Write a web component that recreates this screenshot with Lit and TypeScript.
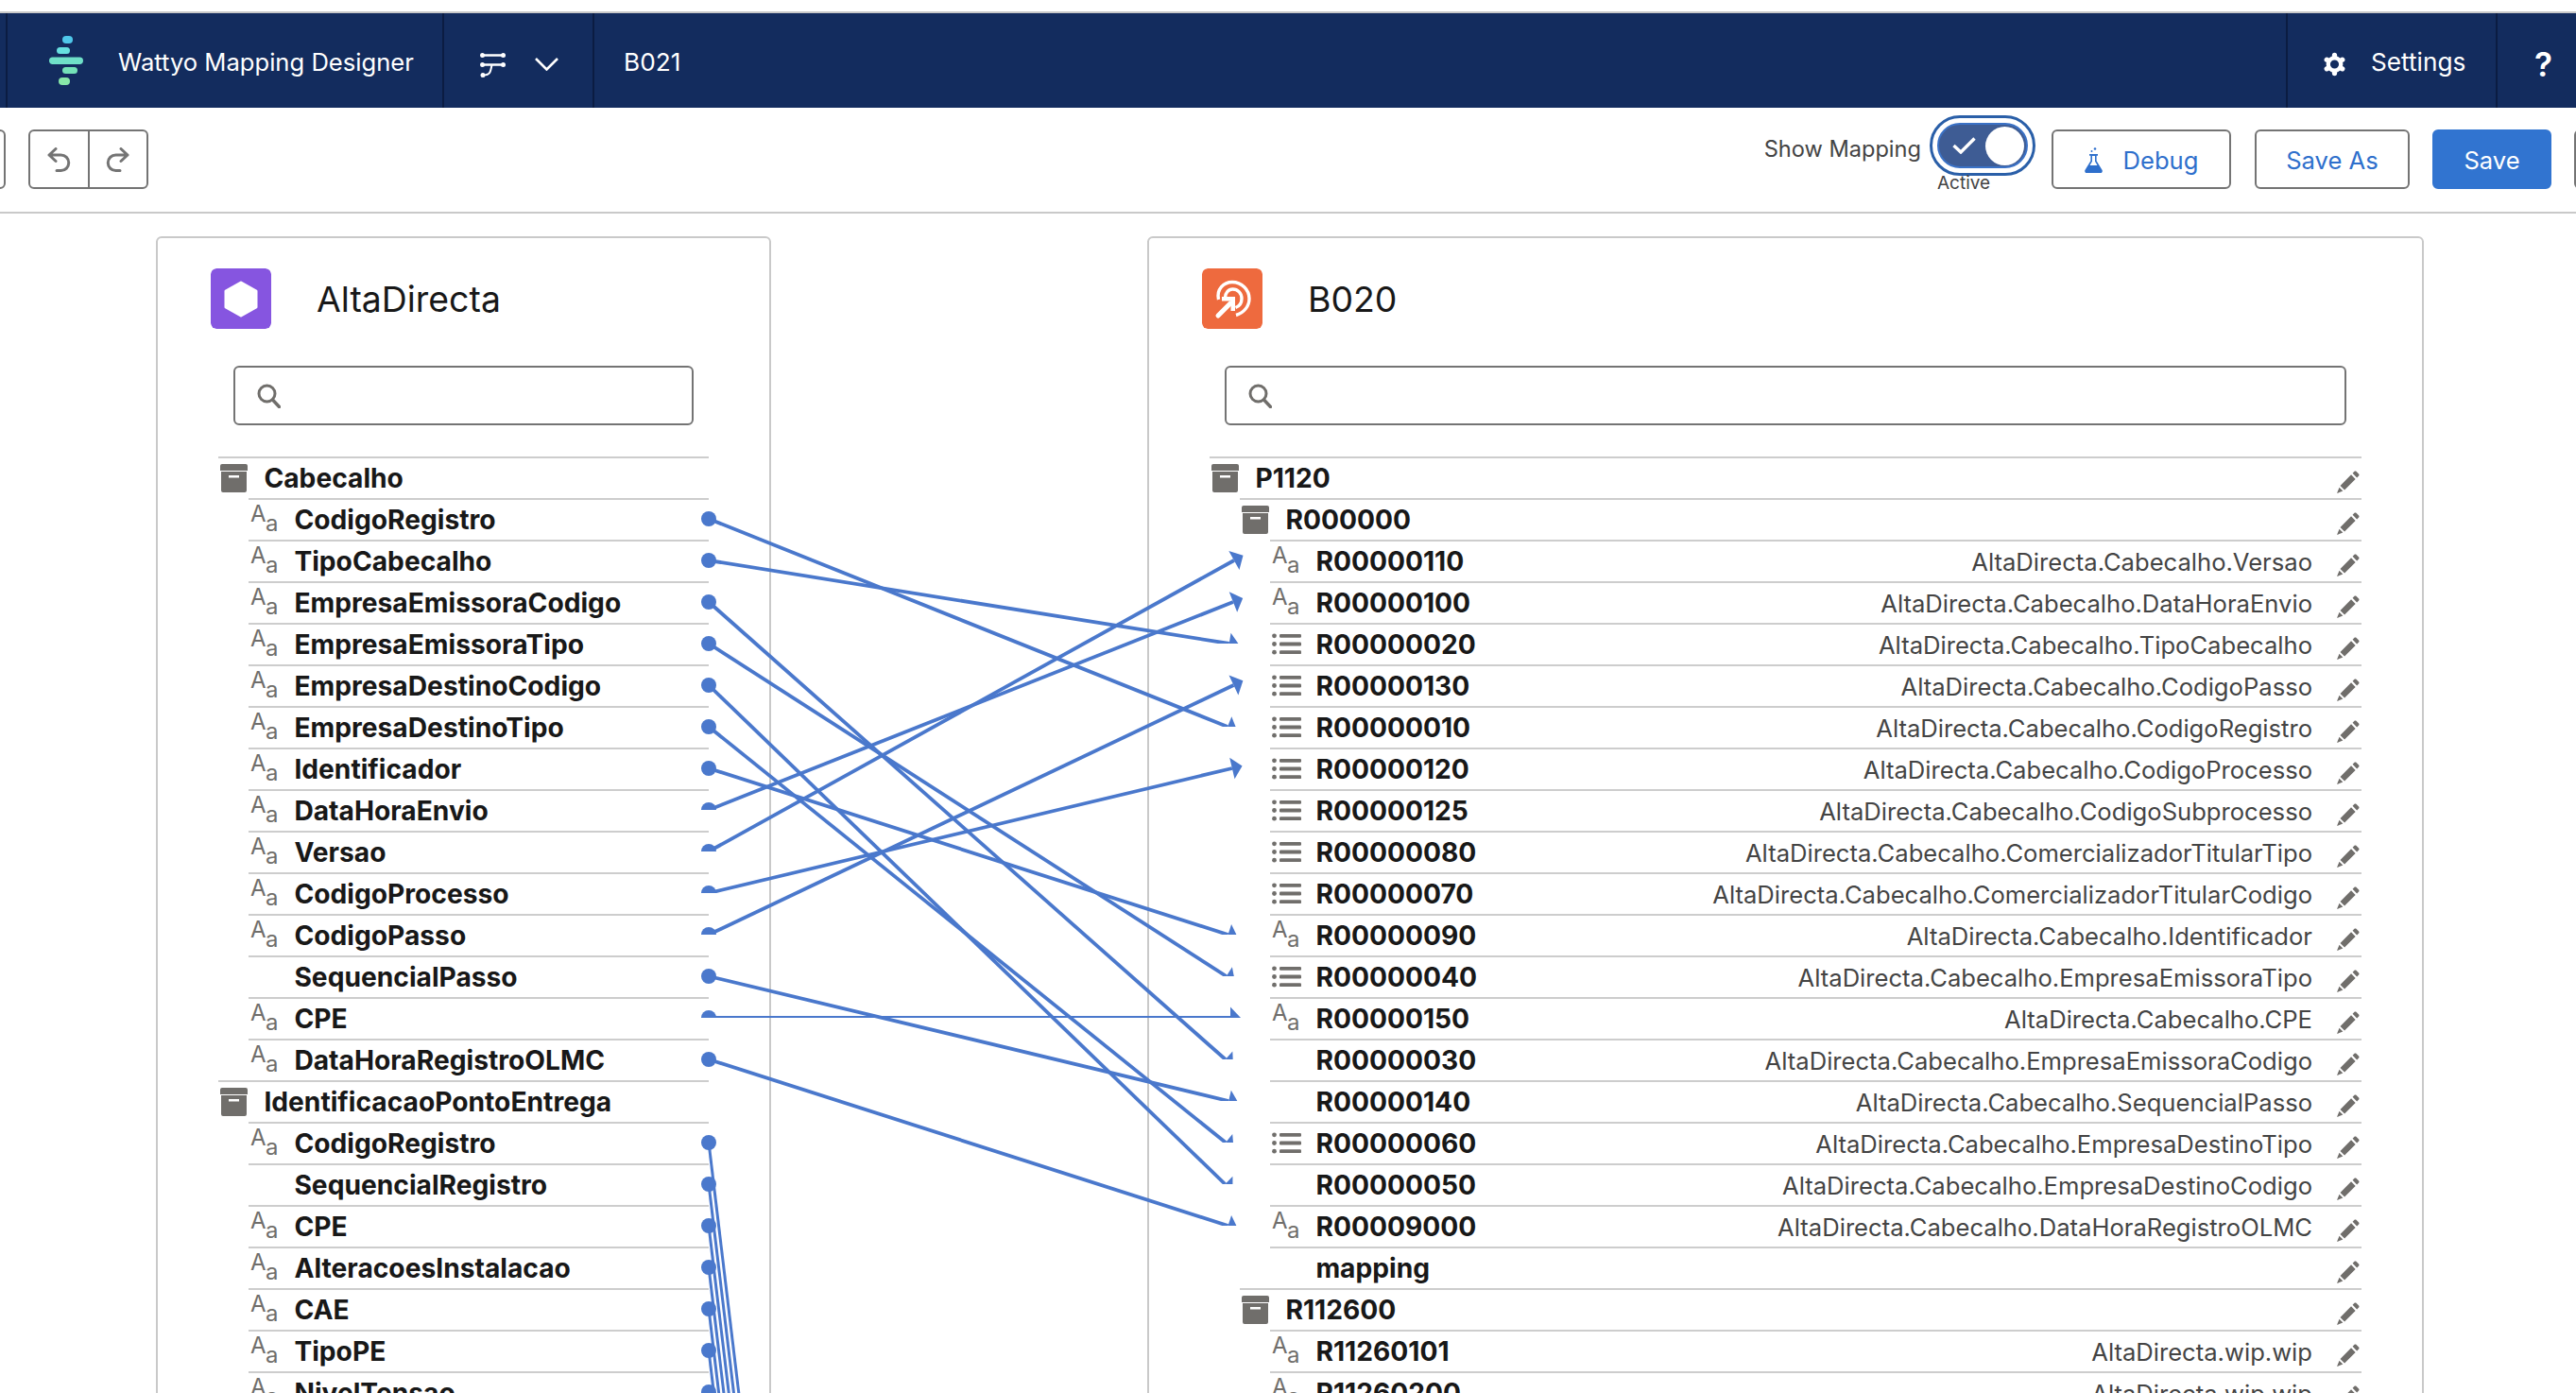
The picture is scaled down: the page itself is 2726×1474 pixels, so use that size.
import { LitElement, html, css, svg, nothing } from "lit";
import { customElement } from "lit/decorators.js";

type Kind = "box" | "aa" | "list" | "none";
interface Row { level: number; kind: Kind; name: string; map?: string; pen?: boolean }

const P = "AltaDirecta.Cabecalho.";
const leftRows: Row[] = [
  { level: 0, kind: "box", name: "Cabecalho" },
  ...[
    ["aa", "CodigoRegistro"], ["aa", "TipoCabecalho"], ["aa", "EmpresaEmissoraCodigo"], ["aa", "EmpresaEmissoraTipo"],
    ["aa", "EmpresaDestinoCodigo"], ["aa", "EmpresaDestinoTipo"], ["aa", "Identificador"], ["aa", "DataHoraEnvio"],
    ["aa", "Versao"], ["aa", "CodigoProcesso"], ["aa", "CodigoPasso"], ["none", "SequencialPasso"], ["aa", "CPE"],
    ["aa", "DataHoraRegistroOLMC"],
  ].map(([k, n]) => ({ level: 1, kind: k as Kind, name: n })),
  { level: 0, kind: "box", name: "IdentificacaoPontoEntrega" },
  ...[
    ["aa", "CodigoRegistro"], ["none", "SequencialRegistro"], ["aa", "CPE"], ["aa", "AlteracoesInstalacao"],
    ["aa", "CAE"], ["aa", "TipoPE"], ["aa", "NivelTensao"],
  ].map(([k, n]) => ({ level: 1, kind: k as Kind, name: n })),
];

const rightRows: Row[] = [
  { level: 0, kind: "box", name: "P1120", pen: true },
  { level: 1, kind: "box", name: "R000000", pen: true },
  ...[
    ["aa", "R00000110", "Versao"], ["aa", "R00000100", "DataHoraEnvio"], ["list", "R00000020", "TipoCabecalho"],
    ["list", "R00000130", "CodigoPasso"], ["list", "R00000010", "CodigoRegistro"], ["list", "R00000120", "CodigoProcesso"],
    ["list", "R00000125", "CodigoSubprocesso"], ["list", "R00000080", "ComercializadorTitularTipo"],
    ["list", "R00000070", "ComercializadorTitularCodigo"], ["aa", "R00000090", "Identificador"],
    ["list", "R00000040", "EmpresaEmissoraTipo"], ["aa", "R00000150", "CPE"], ["none", "R00000030", "EmpresaEmissoraCodigo"],
    ["none", "R00000140", "SequencialPasso"], ["list", "R00000060", "EmpresaDestinoTipo"],
    ["none", "R00000050", "EmpresaDestinoCodigo"], ["aa", "R00009000", "DataHoraRegistroOLMC"],
  ].map(([k, n, m]) => ({ level: 2, kind: k as Kind, name: n, map: P + m, pen: true })),
  { level: 2, kind: "none", name: "mapping", pen: true },
  { level: 1, kind: "box", name: "R112600", pen: true },
  { level: 2, kind: "aa", name: "R11260101", map: "AltaDirecta.wip.wip", pen: true },
  { level: 2, kind: "aa", name: "R11260200", map: "AltaDirecta.wip.wip", pen: true },
];

// left row index -> right row index
const links: [number, number][] = [
  [0, 4], [1, 2], [2, 12], [3, 10], [4, 15], [5, 14], [6, 9], [7, 1], [8, 0], [9, 5], [10, 3], [11, 13], [12, 11], [13, 16],
];

const LINK = "#4a78cc";
const X1 = 750;

function connector(a: number, b: number) {
  const y1 = 549 + 44 * a;
  const y2 = 593 + 44 * b;
  const base = 1302;
  const slope = Math.hypot(base - X1, y2 - y1);
  const X2 = base - (8 * (y2 - y1)) / slope;
  const len = Math.hypot(X2 - X1, y2 - y1);
  const ux = (X2 - X1) / len;
  const uy = (y2 - y1) / len;
  const tip = `${X2 + ux * 11},${y2 + uy * 11}`;
  const c1 = `${X2 - uy * 11.5},${y2 + ux * 11.5}`;
  const c2 = `${X2 + uy * 11.5},${y2 - ux * 11.5}`;
  return svg`<svg x="0" y="0" width="2726" height=${Math.max(y1, y2)}>
    <line x1=${X1} y1=${y1} x2=${X2} y2=${y2} stroke=${LINK} stroke-width="3.8"></line>
    <circle cx=${X1} cy=${y1} r="8" fill=${LINK}></circle>
    <polygon points="${tip} ${c1} ${c2}" fill=${LINK}></polygon>
  </svg>`;
}

function bundleLine(a: number) {
  const y1 = 549 + 44 * a;
  return svg`<line x1=${X1} y1=${y1} x2=${X1 + (1500 - y1) * 0.12} y2="1500" stroke=${LINK} stroke-width="3"></line>
    <circle cx=${X1} cy=${y1} r="8" fill=${LINK}></circle>`;
}

const iconBox = html`<svg class="ic" width="29" height="30" viewBox="0 0 29 30">
  <path fill="#706e6b" d="M2 0h25a2 2 0 0 1 2 2v5H0V2a2 2 0 0 1 2-2zM1 8h27v20a2 2 0 0 1-2 2H3a2 2 0 0 1-2-2zm8 4v2.6h11V12z" fill-rule="evenodd"></path>
</svg>`;
const iconList = html`<svg class="ic list" width="31" height="23" viewBox="0 0 31 23">
  <g fill="#706e6b"><circle cx="2.5" cy="2.8" r="2.4"></circle><circle cx="2.5" cy="11.5" r="2.4"></circle><circle cx="2.5" cy="20.2" r="2.4"></circle>
  <rect x="8" y="1" width="23" height="3.8" rx="1.2"></rect><rect x="8" y="9.600" width="23" height="3.8" rx="1.2"></rect><rect x="8" y="18.300" width="23" height="3.8" rx="1.2"></rect></g>
</svg>`;
const iconAa = html`<span class="aa"><span class="big">A</span><span class="small">a</span></span>`;
const pencil = html`<svg class="pen" width="24" height="24" viewBox="0 0 22 22">
  <path fill="#706e6b" d="M3.2 14.6 13.8 4l4.2 4.2L7.4 18.8zM2.3 16.2l3.5 3.5L0 22zM15.2 2.6 17 .8c.5-.5 1.2-.5 1.7 0l2.5 2.5c.5.5.5 1.2 0 1.7l-1.8 1.8z"></path>
</svg>`;
const searchIcon = html`<svg class="sicon" width="25" height="26" viewBox="0 0 25 26">
  <circle cx="10.5" cy="10.5" r="8.5" fill="none" stroke="#706e6b" stroke-width="3"></circle>
  <path d="M16.5 17 23.5 24.5" stroke="#706e6b" stroke-width="3.4" stroke-linecap="round"></path>
</svg>`;

function rowTpl(r: Row) {
  const icon = r.kind === "box" ? iconBox : r.kind === "aa" ? iconAa : r.kind === "list" ? iconList : nothing;
  return html`<div class="row l${r.level}">
    <span class="slot">${icon}</span>
    <span class="name">${r.name}</span>
    ${r.map ? html`<span class="map">${r.map}</span>` : nothing}
    ${r.pen ? pencil : nothing}
  </div>`;
}

@customElement("app-root")
export class AppRoot extends LitElement {
  static styles = css`
    :host { display: block; position: relative; width: 2726px; height: 1474px; overflow: hidden; background: #fff; font-family: Inter, "Noto Sans", sans-serif; color: #181818; }
    .strip { height: 12px; border-bottom: 2px solid #c9c9c9; }
    .nav { display: flex; height: 100px; background: #132c5e; color: #fff; font-size: 26.2px; }
    .cell { display: flex; align-items: center; border-right: 2px solid #0b1c42; box-sizing: border-box; flex: none; padding-top: 2px; }
    .c0 { width: 8px; }
    .c1 { width: 462px; padding-left: 44px; gap: 37px; font-size: 25.6px; }
    .navlogo { margin-top: -2px; }
    .c2 { width: 159px; padding-left: 38px; gap: 31px; }
    .nudge { margin-top: 6px; }
    .c3 { flex: 1; padding-left: 31px; }
    .c4 { width: 222px; padding-left: 37px; gap: 26px; }
    .c5 { width: 83px; border-right: 0; padding: 7px 0 0 39px; font-size: 35px; font-weight: 600; }

    .tools { display: flex; height: 110px; border-bottom: 2px solid #c9c9c9; box-sizing: content-box; }
    .btn { height: 63px; box-sizing: border-box; border: 2px solid #747474; border-radius: 6px; background: #fff; display: flex; align-items: center; justify-content: center; color: #2e6fcc; font-size: 25.6px; margin-top: 23px; padding-top: 2px; }
    .stub { width: 67px; margin-left: -61px; }
    .group { width: 127px; margin-left: 24px; display: flex; align-items: stretch; padding: 0; }
    .group span { flex: 1; height: 100%; display: flex; align-items: center; justify-content: center; }
    .group span + span { border-left: 2px solid #747474; }
    .spacer { flex: 1; }
    .showm { font-size: 23.6px; color: #444; margin: 30px 9px 0 0; line-height: 28px; }
    .tg { width: 112px; margin: 8px 17px 0 0; }
    .outer { width: 112px; height: 64px; box-sizing: border-box; border: 3px solid #2a5fa8; border-radius: 32px; padding: 5px; }
    .inner { height: 100%; box-sizing: border-box; border: 2px solid #3b72c6; border-radius: 24px; background: #3e5c94; display: flex; align-items: center; justify-content: space-between; padding: 0 2px 0 14px; }
    .knob { width: 41px; height: 41px; border-radius: 50%; background: #fff; }
    .active { font-size: 19px; color: #444; line-height: 14px; margin: 1px 0 0 8px; }
    .debug { width: 190px; gap: 22px; margin-right: 25px; }
    .saveas { width: 164px; margin-right: 24px; }
    .save { width: 126px; margin-right: 24px; background: #3174d0; border-color: #3174d0; color: #fff; }
    .stubr { width: 60px; margin-right: -58px; }

    .main { display: flex; gap: 398px; padding: 24px 0 0 165px; }
    .panel { border: 2px solid #c9c9c9; border-radius: 6px 6px 0 0; box-sizing: border-box; padding: 32px 0 0 56px; flex: none; }
    .pl { width: 651px; }
    .pr { width: 1351px; }
    .head { display: flex; align-items: center; gap: 48px; height: 64px; font-size: 37.4px; }
    .logo { width: 64px; height: 64px; border-radius: 6px; display: block; }
    .search { height: 63px; box-sizing: border-box; margin: 39px 0 33px 24px; border: 2px solid #747474; border-radius: 6px; display: flex; align-items: center; padding-left: 23px; }
    .pl .search { width: 487px; }
    .pr .search { width: 1187px; }
    .tree { margin-left: 8px; }
    .pl .tree { width: 519px; }
    .pr .tree { width: 1219px; }
    .row { display: flex; align-items: center; height: 44px; box-sizing: border-box; border-top: 2px solid #cdcdcd; }
    .l1 { margin-left: 32px; }
    .l2 { margin-left: 64px; }
    .slot { width: 48.4px; flex: none; padding-left: 2px; box-sizing: border-box; display: flex; align-items: center; align-self: stretch; }
    .name { font-size: 28.2px; font-weight: 700; flex: 1; white-space: nowrap; }
    .map { font-size: 25.6px; color: #444; margin-right: 26px; white-space: nowrap; }
    .pen { margin: 13px 2px 0 0; flex: none; align-self: flex-start; }
    .ic { display: block; }
    .ic.list { margin-top: -2px; }
    .aa { display: flex; align-items: flex-start; align-self: flex-start; margin-top: 3px; color: #706e6b; letter-spacing: -0.5px; }
    .big { font-size: 24px; line-height: 24px; }
    .small { font-size: 24px; line-height: 24px; margin: 10px 0 0 0; }
    .wires { position: absolute; left: 0; top: 0; pointer-events: none; }
  `;

  render() {
    return html`
      <div class="strip"></div>
      <div class="nav">
        <div class="cell c0"></div>
        <div class="cell c1">
          <svg class="navlogo" width="36" height="52" viewBox="0 0 36 52">
            <rect x="14" y="0" width="11" height="8" rx="4" fill="#4fc8ea"></rect>
            <rect x="8" y="12" width="14" height="7" rx="3.5" fill="#67e0e0"></rect>
            <rect x="0" y="22.5" width="36" height="7.5" rx="3.7" fill="#6fe0c8"></rect>
            <rect x="14" y="33" width="16" height="7" rx="3.5" fill="#74e2b8"></rect>
            <rect x="10" y="44" width="12" height="8" rx="4" fill="#88e8a8"></rect>
          </svg>
          <span>Wattyo Mapping Designer</span>
        </div>
        <div class="cell c2">
          <svg class="nudge" width="27" height="27" viewBox="0 0 27 27" fill="none" stroke="#fff">
            <path d="M2 3.500H25M2 13.500H25" stroke-width="2.400"></path>
            <path d="M3 24.500c7 0 8-2 9.500-11" stroke-width="2"></path>
            <g fill="#fff" stroke="none"><circle cx="2.500" cy="3.500" r="2.500"></circle><circle cx="24.500" cy="3.500" r="2.500"></circle><circle cx="2.500" cy="13.500" r="2.500"></circle><circle cx="24.500" cy="13.500" r="2.500"></circle><circle cx="3" cy="24.500" r="2.500"></circle></g>
          </svg>
          <svg class="nudge" width="25" height="14" viewBox="0 0 25 14" fill="none" stroke="#fff" stroke-width="2.600"><path d="M1 1l11.500 11.500L24 1"></path></svg>
        </div>
        <div class="cell c3">B021</div>
        <div class="cell c4">
          <svg class="nudge" width="25" height="26" viewBox="0 0 26 26" fill="none" stroke="#fff">
            <circle cx="13" cy="13" r="7" stroke-width="4.500"></circle>
            <g stroke-width="5.500" stroke-linecap="round"><path d="M13 3v.5M13 22.500v.5M4.400 8l.4.2M21.200 17.800l.4.2M4.400 18l.4-.2M21.200 8.200l.4-.2"></path></g>
          </svg>
          <span>Settings</span>
        </div>
        <div class="cell c5">?</div>
      </div>

      <div class="tools">
        <div class="btn stub"></div>
        <div class="btn group">
          <span><svg width="25" height="26" viewBox="0 0 25 26" fill="none" stroke="#747474" stroke-width="3" stroke-linecap="round" stroke-linejoin="round"><path d="M9 1.500 2 8l7 6.500M2 8h12.500a8 8 0 0 1 0 16.500H10"></path></svg></span>
          <span><svg width="25" height="26" viewBox="0 0 25 26" fill="none" stroke="#747474" stroke-width="3" stroke-linecap="round" stroke-linejoin="round"><path d="M16 1.500 23 8l-7 6.500M23 8H10.500a8 8 0 0 0 0 16.500H15"></path></svg></span>
        </div>
        <div class="spacer"></div>
        <div class="showm">Show Mapping</div>
        <div class="tg">
          <div class="outer"><div class="inner">
            <svg width="25" height="18" viewBox="0 0 25 18" fill="none" stroke="#fff" stroke-width="3.400"><path d="M1.500 9 9 16 23.500 1.500"></path></svg>
            <div class="knob"></div>
          </div></div>
          <div class="active">Active</div>
        </div>
        <div class="btn debug">
          <svg width="19" height="27" viewBox="0 0 19 27" fill="#2e6fcc">
            <circle cx="11" cy="1.500" r="1.300"></circle><circle cx="7.500" cy="4" r="1"></circle>
            <path d="M5 7h9v1.800h-1.400v5.400L18.600 24c.6 1.300-.2 3-1.800 3H2.200C.6 27-.2 25.300.4 24L6.400 14.200V8.800H5zM8 9v5.800L5.500 19h8L11 14.800V9z" fill-rule="evenodd"></path>
            <path d="M5 19h9l3 6H2z"></path>
          </svg>
          <span>Debug</span>
        </div>
        <div class="btn saveas">Save As</div>
        <div class="btn save">Save</div>
        <div class="btn stubr"></div>
      </div>

      <div class="main">
        <section class="panel pl">
          <div class="head">
            <svg class="logo" viewBox="0 0 64 64"><rect width="64" height="64" rx="6" fill="#8655e0"></rect>
              <polygon points="32,15 48,24 48,41 32,50 16,41 16,24" fill="#fff" stroke="#fff" stroke-width="3" stroke-linejoin="round"></polygon></svg>
            <span>AltaDirecta</span>
          </div>
          <div class="search">${searchIcon}</div>
          <div class="tree">${leftRows.map(rowTpl)}</div>
        </section>
        <section class="panel pr">
          <div class="head">
            <svg class="logo" viewBox="0 0 64 64"><rect width="64" height="64" rx="6" fill="#ee6a3e"></rect>
              <g fill="none" stroke="#fff" stroke-width="3.400">
                <path d="M17.500 33C15 22 23 14.500 32 14.500c10 0 18 8 18 17.500 0 8-5.500 15-14 17.500"></path>
                <path d="M24.500 31c0-5 3.500-9 8-9 5.500 0 9.500 4.500 9.500 10 0 4.500-2.500 8-6.500 9.500"></path>
              </g>
              <path d="M17 50 30 37" stroke="#fff" stroke-width="5" stroke-linecap="round"></path>
              <polygon points="21,30 35,30 35,45 30.500,45 30.500,34.500 21,34.500" fill="#fff"></polygon></svg>
            <span>B020</span>
          </div>
          <div class="search">${searchIcon}</div>
          <div class="tree">${rightRows.map(rowTpl)}</div>
        </section>
      </div>

      <svg class="wires" width="2726" height="1474" viewBox="0 0 2726 1474">
        ${links.map(([a, b]) => connector(a, b))}
        ${[15, 16, 17, 18, 19, 20, 21].map(bundleLine)}
      </svg>
    `;
  }
}
